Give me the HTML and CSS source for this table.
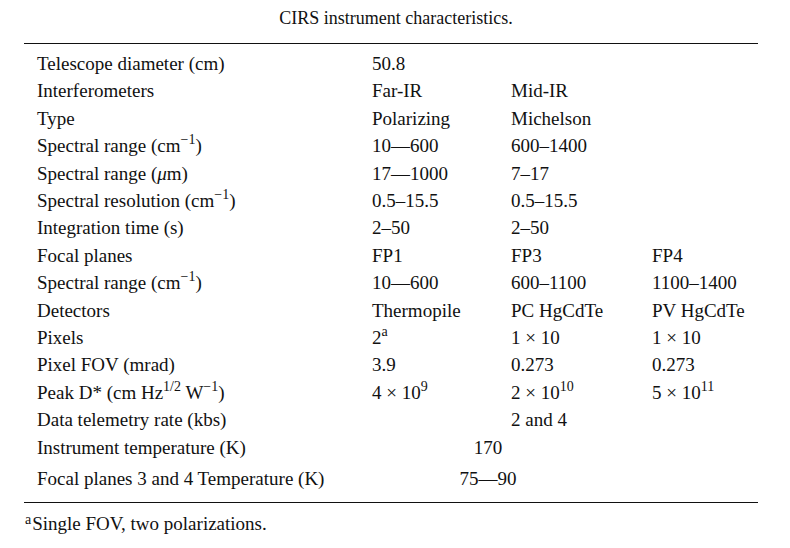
FILE: index.html
```html
<!DOCTYPE html>
<html>
<head>
<meta charset="utf-8">
<link rel="stylesheet" href="styles.css">
</head>
<body>
<div class="page">
  <div class="caption">CIRS instrument characteristics.</div>
  <table class="spec">
    <colgroup>
      <col class="c1"><col class="c2"><col class="c3"><col class="c4">
    </colgroup>
    <tbody>
      <tr class="first"><td>Telescope diameter (cm)</td><td>50.8</td><td></td><td></td></tr>
      <tr><td>Interferometers</td><td>Far-IR</td><td>Mid-IR</td><td></td></tr>
      <tr><td>Type</td><td>Polarizing</td><td>Michelson</td><td></td></tr>
      <tr><td>Spectral range (cm<sup>&minus;1</sup>)</td><td>10&mdash;600</td><td>600&ndash;1400</td><td></td></tr>
      <tr><td>Spectral range (<i>&mu;</i>m)</td><td>17&mdash;1000</td><td>7&ndash;17</td><td></td></tr>
      <tr><td>Spectral resolution (cm<sup>&minus;1</sup>)</td><td>0.5&ndash;15.5</td><td>0.5&ndash;15.5</td><td></td></tr>
      <tr><td>Integration time (s)</td><td>2&ndash;50</td><td>2&ndash;50</td><td></td></tr>
      <tr><td>Focal planes</td><td>FP1</td><td>FP3</td><td>FP4</td></tr>
      <tr><td>Spectral range (cm<sup>&minus;1</sup>)</td><td>10&mdash;600</td><td>600&ndash;1100</td><td>1100&ndash;1400</td></tr>
      <tr><td>Detectors</td><td>Thermopile</td><td>PC HgCdTe</td><td>PV HgCdTe</td></tr>
      <tr><td>Pixels</td><td>2<sup class="a">a</sup></td><td>1 &times; 10</td><td>1 &times; 10</td></tr>
      <tr><td>Pixel FOV (mrad)</td><td>3.9</td><td>0.273</td><td>0.273</td></tr>
      <tr><td>Peak D* (cm Hz<sup>1/2</sup> W<sup>&minus;1</sup>)</td><td>4 &times; 10<sup>9</sup></td><td>2 &times; 10<sup>10</sup></td><td>5 &times; 10<sup>11</sup></td></tr>
      <tr><td>Data telemetry rate (kbs)</td><td></td><td>2 and 4</td><td></td></tr>
      <tr class="wide"><td>Instrument temperature (K)</td><td colspan="2" class="mid">170</td><td></td></tr>
      <tr class="wider"><td>Focal planes 3 and 4 Temperature (K)</td><td colspan="2" class="mid">75&mdash;90</td><td></td></tr>
    </tbody>
  </table>
  <div class="note"><sup class="fn">a</sup>Single FOV, two polarizations.</div>
</div>
</body>
</html>
```

FILE: styles.css
```css
html, body {
  margin: 0;
  padding: 0;
  background: #ffffff;
}
body {
  font-family: "Liberation Serif", "Times New Roman", serif;
  font-size: 18px;
  color: #111111;
}
.page {
  width: 790px;
  height: 548px;
  padding-top: 5px;
  box-sizing: border-box;
}
.caption {
  text-align: center;
  line-height: 26px;
  height: 26px;
  padding-left: 2px;
}
.spec {
  margin: 12px 0 0 24px;
  width: 734px;
  border-collapse: collapse;
  border-top: 1.5px solid #111;
  border-bottom: 1.5px solid #111;
  table-layout: fixed;
  font-size: 19px;
}
.c1 { width: 348px; }
.c2 { width: 139px; }
.c3 { width: 141px; }
.c4 { width: 106px; }
.spec td {
  padding: 0;
  height: 27.4px;
  line-height: 27.4px;
  white-space: nowrap;
  vertical-align: middle;
}
.spec td:first-child {
  padding-left: 13px;
}
.spec tr.first td {
  padding-top: 6px;
}
.spec tr.wide td {
  height: 28px;
}
.spec tr.wider td {
  height: 32px;
  padding-top: 1px;
  padding-bottom: 7px;
}
.spec td.mid {
  text-align: center;
  padding-right: 48px;
}
sup {
  font-size: 14px;
  line-height: 0;
  vertical-align: 8px;
}
.note {
  padding-left: 25px;
  margin-top: 10px;
  line-height: 22px;
  font-size: 19px;
}
sup.fn {
  font-size: 14px;
  vertical-align: 6px;
  margin-right: 1px;
}
```
